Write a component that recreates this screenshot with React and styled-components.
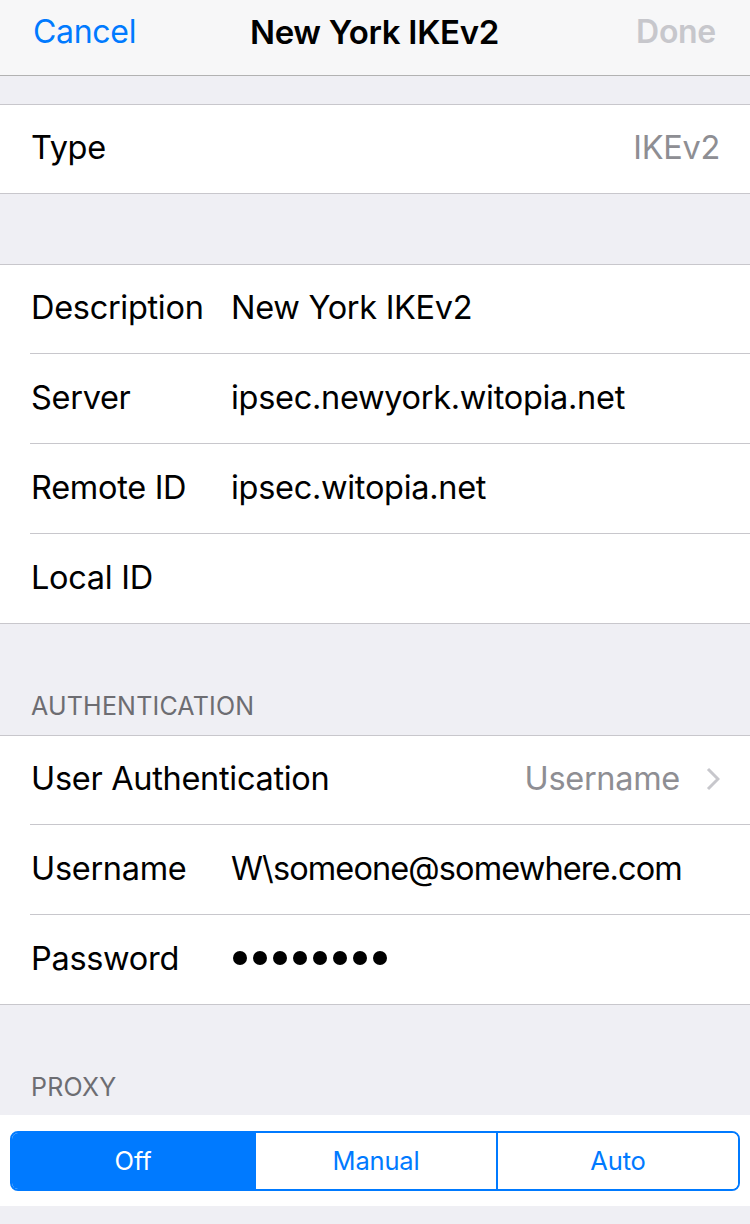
import React, { useState } from 'react';
import styled, { createGlobalStyle } from 'styled-components';

const GlobalStyle = createGlobalStyle`
  html, body {
    margin: 0;
    padding: 0;
    background: #efeff4;
  }
  body {
    font-family: 'Inter', 'Liberation Sans', sans-serif;
    -webkit-font-smoothing: antialiased;
  }
`;

const Screen = styled.div`
  width: 750px;
  min-height: 1224px;
  background: #efeff4;
  overflow: hidden;
`;

const NavBar = styled.header`
  height: 63px;
  background: #f7f7f8;
  border-bottom: 1px solid #b2b2b2;
  display: grid;
  grid-template-columns: 1fr auto 1fr;
  align-items: center;
  padding: 0 34px 12px 33px;
`;

const NavButton = styled.button`
  background: none;
  border: 0;
  padding: 0;
  font-family: inherit;
  font-size: 32px;
  letter-spacing: -0.3px;
  color: ${p => (p.$disabled ? '#c7c7cc' : '#007aff')};
  font-weight: ${p => (p.$disabled ? 600 : 400)};
  justify-self: ${p => p.$align || 'start'};
`;

const Title = styled.h1`
  margin: 0;
  font-size: 33px;
  font-weight: 600;
  letter-spacing: -0.3px;
  color: #000;
`;

const Gap = styled.div`
  height: ${p => p.$h}px;
`;

const SectionHeader = styled.div`
  height: ${p => p.$h}px;
  display: flex;
  align-items: flex-end;
  padding: 0 31px ${p => p.$pb}px;
  box-sizing: border-box;
  font-size: 25px;
  color: #6d6d72;
  letter-spacing: 0.2px;
`;

const Group = styled.section`
  background: #fff;
  border-top: 1px solid #c8c7cc;
  border-bottom: 1px solid #c8c7cc;
`;

const Row = styled.div`
  height: 88px;
  box-sizing: border-box;
  display: flex;
  align-items: center;
  margin-left: 30px;
  padding: 0 30px 3px 0;
  font-size: 32.5px;
  letter-spacing: -0.3px;
  color: #000;
  white-space: nowrap;
  & + & {
    height: 90px;
    border-top: 1px solid #c8c7cc;
  }
`;

const Label = styled.span`
  width: 200px;
  flex-shrink: 0;
  padding-left: 1px;
`;

const Value = styled.span`
  flex: 1;
  letter-spacing: ${p => p.$tight ? '-0.9px' : 'inherit'};
`;

const Detail = styled.span`
  margin-left: auto;
  color: #8e8e93;
  display: flex;
  align-items: center;
  gap: 26px;
`;

const Dots = styled.span`
  display: flex;
  gap: 6px;
  padding-left: 2px;
`;

const Dot = styled.span`
  width: 14px;
  height: 14px;
  border-radius: 50%;
  background: #000;
`;

const ProxyPanel = styled.div`
  background: #fff;
  padding: 16px 10px 15px;
`;

const Segmented = styled.div`
  display: grid;
  grid-template-columns: repeat(3, 1fr);
  height: 60px;
  border: 2px solid #007aff;
  border-radius: 8px;
  overflow: hidden;
  box-sizing: border-box;
`;

const Segment = styled.button`
  border: 0;
  margin: 0;
  padding: 0 0 2px;
  font-family: inherit;
  font-size: 25.5px;
  letter-spacing: -0.2px;
  background: ${p => (p.$active ? '#007aff' : '#fff')};
  color: ${p => (p.$active ? '#fff' : '#007aff')};
  & + & {
    border-left: 2px solid #007aff;
  }
`;

const Chevron = () => (
  <svg width="14" height="24" viewBox="0 0 14 24">
    <path d="M2 2 L12 12 L2 22" fill="none" stroke="#c7c7cc" strokeWidth="3" />
  </svg>
);

const connection = [
  ['Description', 'New York IKEv2'],
  ['Server', 'ipsec.newyork.witopia.net'],
  ['Remote ID', 'ipsec.witopia.net'],
  ['Local ID', ''],
];

export default function App() {
  const [proxy, setProxy] = useState('Off');

  return (
    <Screen>
      <GlobalStyle />
      <NavBar>
        <NavButton>Cancel</NavButton>
        <Title>New York IKEv2</Title>
        <NavButton $disabled $align="end">Done</NavButton>
      </NavBar>

      <Gap $h={28} />
      <Group>
        <Row>
          <Label>Type</Label>
          <Detail>IKEv2</Detail>
        </Row>
      </Group>

      <Gap $h={70} />
      <Group>
        {connection.map(([label, value]) => (
          <Row key={label}>
            <Label>{label}</Label>
            <Value>{value}</Value>
          </Row>
        ))}
      </Group>

      <SectionHeader $h={111} $pb={14}>AUTHENTICATION</SectionHeader>
      <Group>
        <Row>
          <Label>User Authentication</Label>
          <Detail>
            Username
            <Chevron />
          </Detail>
        </Row>
        <Row>
          <Label>Username</Label>
          <Value $tight>W\someone@somewhere.com</Value>
        </Row>
        <Row>
          <Label>Password</Label>
          <Dots>
            {Array.from({ length: 8 }).map((_, i) => (
              <Dot key={i} />
            ))}
          </Dots>
        </Row>
      </Group>

      <SectionHeader $h={110} $pb={13}>PROXY</SectionHeader>
      <ProxyPanel>
        <Segmented>
          {['Off', 'Manual', 'Auto'].map(opt => (
            <Segment key={opt} $active={proxy === opt} onClick={() => setProxy(opt)}>
              {opt}
            </Segment>
          ))}
        </Segmented>
      </ProxyPanel>
    </Screen>
  );
}
